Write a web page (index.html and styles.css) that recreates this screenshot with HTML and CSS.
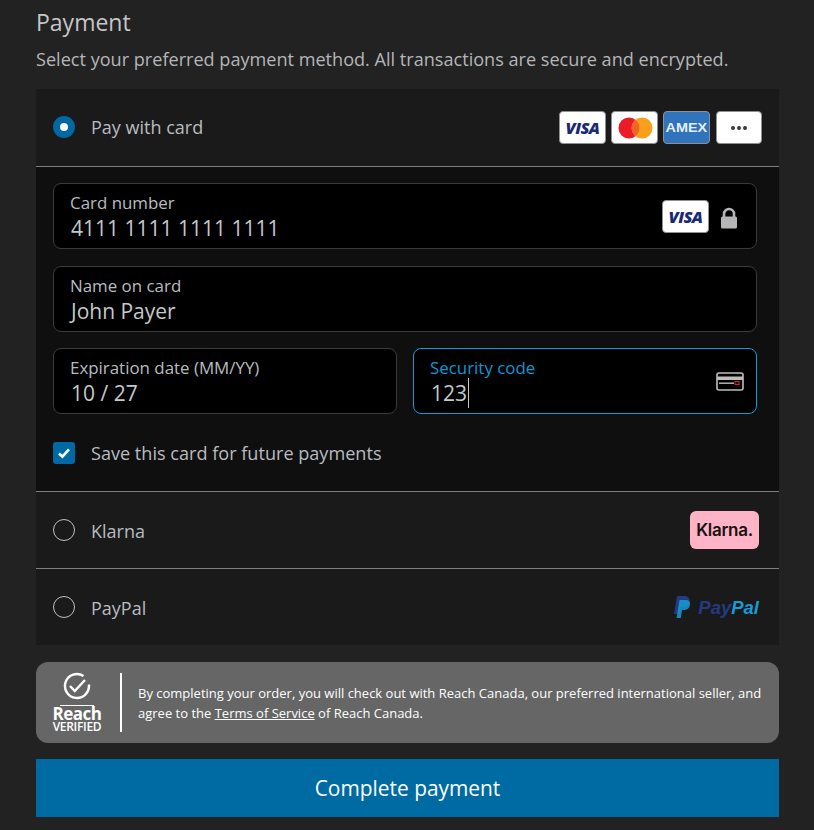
FILE: index.html
```html
<!DOCTYPE html>
<html lang="en">

<head>
  <meta charset="UTF-8">
  <meta name="viewport" content="width=device-width, initial-scale=1.0">
  <title>Payment</title>
  <link rel="stylesheet" href="styles.css">
</head>

<body>
  <div class="checkout">
    <h1 class="title">Payment</h1>
    <p class="subtitle">Select your preferred payment method. All transactions are secure and encrypted.</p>

    <div class="methods">
      <div class="method">
        <span class="radio checked"></span>
        <span class="methodName selected">Pay with card</span>
        <div class="cardIcons">
          <span class="cardIcon"><span class="visaText">VISA</span></span>
          <span class="cardIcon">
            <svg width="36" height="22" viewBox="0 0 36 22">
              <circle cx="12" cy="11" r="10.5" fill="#eb1c26"></circle>
              <circle cx="25" cy="11" r="10.5" fill="#f99f1c"></circle>
              <path d="M18.5 2.8a10.5 10.5 0 0 1 0 16.4a10.5 10.5 0 0 1 0-16.4z" fill="#f26522"></path>
            </svg>
          </span>
          <span class="cardIcon amex"><span class="amexText">AMEX</span></span>
          <span class="cardIcon more"><i></i><i></i><i></i></span>
        </div>
      </div>

      <div class="cardForm">
        <div class="field">
          <div class="fieldText">
            <label>Card number</label>
            <div class="value">4111 1111 1111 1111</div>
          </div>
          <span class="cardIcon"><span class="visaText">VISA</span></span>
          <svg class="lock" width="18" height="22" viewBox="0 0 18 22">
            <path d="M4 10V7a5 5 0 0 1 10 0v3" fill="none" stroke="#b5b5b7" stroke-width="2.6"></path>
            <rect x="1" y="9.5" width="16" height="12" rx="1.5" fill="#b5b5b7"></rect>
          </svg>
        </div>

        <div class="field">
          <div class="fieldText">
            <label>Name on card</label>
            <div class="value">John Payer</div>
          </div>
        </div>

        <div class="fieldRow">
          <div class="field">
            <div class="fieldText">
              <label>Expiration date (MM/YY)</label>
              <div class="value">10 / 27</div>
            </div>
          </div>
          <div class="field focused">
            <div class="fieldText">
              <label>Security code</label>
              <div class="value">123<span class="caret"></span></div>
            </div>
            <svg class="cvv" width="28" height="19" viewBox="0 0 28 19">
              <rect x="1" y="1" width="26" height="17" rx="2" fill="none" stroke="#bdbdbd" stroke-width="1.6"></rect>
              <rect x="1" y="4.5" width="26" height="3.5" fill="#bdbdbd"></rect>
              <rect x="3" y="10.5" width="15" height="1.4" fill="#bdbdbd"></rect>
              <rect x="19" y="9.5" width="4" height="3" fill="none" stroke="#e0202a"></rect>
            </svg>
          </div>
        </div>

        <div class="saveCard">
          <span class="checkbox">
            <svg width="14" height="12" viewBox="0 0 14 12">
              <path d="M2 6.5l3.4 3.2L12 2.4" fill="none" stroke="#fff" stroke-width="2.6"></path>
            </svg>
          </span>
          <span class="saveLabel">Save this card for future payments</span>
        </div>
      </div>

      <div class="method bordered">
        <span class="radio"></span>
        <span class="methodName">Klarna</span>
        <span class="klarna">Klarna.</span>
      </div>

      <div class="method bordered">
        <span class="radio"></span>
        <span class="methodName">PayPal</span>
        <span class="paypal">
          <svg width="18" height="22" viewBox="0 0 18 22">
            <path d="M4 0h7c4 0 6 2 5.400 5.500C15.800 9 13.500 11 10 11H7l-1.300 7H1z" fill="#253b80"></path>
            <path d="M6.500 4h6c3.500 0 5 1.800 4.500 4.800C16.500 12 14.500 14 11.500 14H9l-1.200 8H3.600z" fill="#179bd7" opacity="0.85"></path>
          </svg>
          <span class="pay">Pay</span><span class="pal">Pal</span>
        </span>
      </div>
    </div>

    <div class="notice">
      <div class="reach">
        <svg class="reachCheck" width="28" height="28" viewBox="0 0 28 28">
          <path d="M20.500 3.900A12 12 0 1 0 25.900 12.500" fill="none" stroke="#fff" stroke-width="2.400"></path>
          <path d="M7 14l4.800 5L22 8" fill="none" stroke="#fff" stroke-width="2.400"></path>
        </svg>
        <span class="reachBar"></span>
        <span class="reachName">Reach</span>
        <span class="reachVerified">VERIFIED</span>
      </div>
      <p class="noticeText">By completing your order, you will check out with Reach Canada, our preferred international seller, and agree to the <a href="#">Terms of Service</a> of Reach Canada.</p>
    </div>

    <button class="payButton">Complete payment</button>
  </div>
</body>

</html>
```

FILE: styles.css
```css
body {
  margin: 0;
  background-color: #222222;
  font-family: "Open Sans", "Noto Sans", Arial, sans-serif;
  color: #b8bcc0;
  overflow: hidden;
}

.checkout {
  width: 743px;
  margin-left: 36px;
  padding-top: 6px;
}

.title {
  margin: 0;
  font-size: 23px;
  line-height: 32px;
  font-weight: 400;
  color: #c4c6c8;
}

.subtitle {
  margin: 9px 0 17px;
  font-size: 18.1px;
  line-height: 25px;
  color: #b4b6b8;
}

.methods {
  background-color: #1a1a1a;
}

.method {
  display: flex;
  align-items: center;
  height: 77px;
  padding: 0 20px 0 17px;
}

.method.bordered {
  border-top: 1px solid #7e7e7e;
  height: 76px;
}

.radio {
  width: 22px;
  height: 22px;
  box-sizing: border-box;
  border: 1px solid #c0c0c0;
  border-radius: 50%;
  flex-shrink: 0;
}

.radio.checked {
  border: 7px solid #0069a3;
  background-color: #fff;
  margin-bottom: 2px;
}

.methodName {
  margin-left: 16px;
  margin-top: 2px;
  flex: 1;
  font-size: 18px;
}

.methodName.selected {
  margin-top: 0;
  margin-bottom: 2px;
}

.cardIcons {
  display: flex;
  gap: 5px;
  margin-right: -3px;
}

.cardIcon {
  display: flex;
  align-items: center;
  justify-content: center;
  width: 47px;
  height: 33px;
  box-sizing: border-box;
  background-color: #fff;
  border: 1px solid #8f8f95;
  border-radius: 4px;
  flex-shrink: 0;
}

.visaText {
  font-family: "Open Sans", Arial, sans-serif;
  font-weight: 800;
  font-style: italic;
  font-size: 16.5px;
  letter-spacing: -0.6px;
  color: #1a2a78;
}

.amex {
  background-color: #2f74bd;
}

.amexText {
  font-family: "Liberation Sans", Arial, sans-serif;
  font-weight: 700;
  font-size: 12px;
  transform: scaleX(1.2);
  color: #e6eef8;
}

.more {
  gap: 2px;
  margin-left: 1px;
  width: 46px;
}

.more i {
  width: 4px;
  height: 4px;
  border-radius: 50%;
  background-color: #3a3a3a;
}

.cardForm {
  display: flex;
  flex-direction: column;
  gap: 17px;
  padding: 16px 22px 27px 17px;
  background-color: #0f0f0f;
  border-top: 1px solid #7e7e7e;
}

.field {
  display: flex;
  align-items: center;
  height: 66px;
  box-sizing: border-box;
  padding: 0 18px 0 16px;
  background-color: #000;
  border: 1px solid #3b3b3b;
  border-radius: 8px;
}

.field.focused {
  border-color: #0f9ad8;
}

.field.focused label {
  color: #0f97d6;
}

.fieldText {
  flex: 1;
  padding-top: 4px;
}

.field label {
  display: block;
  font-size: 16.9px;
  line-height: 20px;
  color: #b8bcc0;
}

.value {
  display: flex;
  align-items: center;
  margin-left: 1px;
  font-size: 21px;
  line-height: 30px;
  color: #c6c8ca;
}

.caret {
  width: 1px;
  height: 30px;
  margin-left: 1px;
  background-color: #c6c8ca;
}

.lock {
  margin-left: 11px;
  margin-top: 3px;
}

.cvv {
  margin-right: -6px;
}

.fieldRow {
  display: grid;
  grid-template-columns: 344px 344px;
  gap: 16px;
  margin-top: -1px;
}

.saveCard {
  display: flex;
  align-items: center;
  height: 22px;
  margin-top: 11px;
}

.checkbox {
  display: flex;
  align-items: center;
  justify-content: center;
  width: 22px;
  height: 22px;
  background-color: #0069a3;
  border-radius: 3px;
}

.saveLabel {
  margin-left: 16px;
  font-size: 18.1px;
  line-height: 22px;
}

.klarna {
  display: flex;
  align-items: center;
  justify-content: center;
  width: 69px;
  height: 38px;
  background-color: #ffb3c7;
  border-radius: 6px;
  font-family: "Inter", Arial, sans-serif;
  font-weight: 600;
  font-size: 17px;
  letter-spacing: -0.3px;
  color: #17120f;
}

.paypal {
  display: flex;
  align-items: center;
  font-family: "Liberation Sans", Arial, sans-serif;
  font-style: italic;
  font-weight: 700;
  font-size: 18.500px;
}

.paypal svg {
  margin-right: 7px;
}

.pay,
.pal {
  margin-top: 2px;
}

.pay {
  color: #253b80;
}

.pal {
  color: #179bd7;
}

.notice {
  display: flex;
  align-items: center;
  height: 81px;
  margin-top: 17px;
  padding: 0 16px 0 16px;
  background-color: #666666;
  border-radius: 12px;
  box-sizing: border-box;
}

.reach {
  display: flex;
  flex-direction: column;
  align-items: center;
  flex-shrink: 0;
  width: 50px;
  padding-right: 18px;
  margin-right: 16px;
  border-right: 2px solid #fff;
  color: #fff;
  height: 59px;
}

.reachCheck {
  margin-top: -1px;
  flex-shrink: 0;
}

.reachBar {
  width: 34px;
  height: 1px;
  margin-top: 5px;
  flex-shrink: 0;
  background-color: #fff;
}

.reachName {
  font-size: 17px;
  font-weight: 700;
  line-height: 14px;
  margin-top: 1px;
  letter-spacing: -0.5px;
}

.reachVerified {
  font-size: 12px;
  font-weight: 600;
  line-height: 12px;
  letter-spacing: -0.3px;
}

.noticeText {
  margin: 0;
  font-size: 13px;
  line-height: 20px;
  color: #fff;
}

.noticeText a {
  color: #fff;
}

.payButton {
  display: block;
  width: 100%;
  height: 58px;
  margin-top: 16px;
  background-color: #006aa3;
  color: #fff;
  border: none;
  font-family: inherit;
  font-size: 20.9px;
}
```
